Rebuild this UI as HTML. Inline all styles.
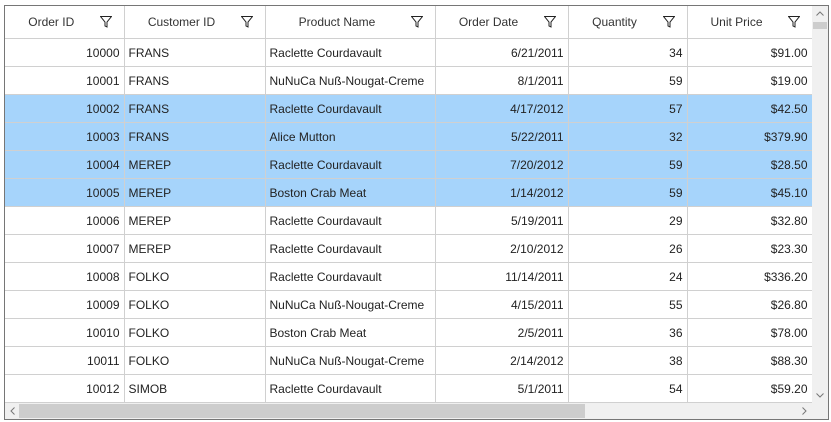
<!DOCTYPE html>
<html><head><style>
body{margin:0;width:831px;height:422px;background:#fff;font-family:"Liberation Sans",sans-serif;font-size:12px;position:relative;overflow:hidden}
.g{position:absolute;left:4px;top:5px;width:823px;height:413px;border:1px solid #767676;overflow:hidden}
table{border-collapse:collapse;table-layout:fixed;position:absolute;left:0;top:0}
td,th{border-right:1px solid #d0d0d0;border-bottom:1px solid #d0d0d0;padding:0 4px;white-space:nowrap;overflow:hidden}
th{height:32px;font-weight:normal;color:#333;position:relative;text-align:center;padding-right:30px}
th svg{position:absolute;right:12px;top:10px}
td{height:27px;color:#222}
.r{text-align:right}
tr.s td{background:#a6d4fb}
.vs{position:absolute;left:807px;top:0;width:16px;height:397px;background:#f0f0f0}
.hs{position:absolute;left:0;top:397px;width:807px;height:16px;background:#f0f0f0}
.corner{position:absolute;left:807px;top:397px;width:16px;height:16px;background:#f0f0f0}
</style></head><body>
<div class="g">
<table>
<colgroup><col style="width:119px"><col style="width:141px"><col style="width:170px"><col style="width:133px"><col style="width:119px"><col style="width:125px"></colgroup>
<tr><th>Order ID<svg width="12" height="12" viewBox="0 0 12 12"><path d="M0.5 0.5H11.5L7 6V11L5 10V6Z" fill="none" stroke="#222"/></svg></th><th>Customer ID<svg width="12" height="12" viewBox="0 0 12 12"><path d="M0.5 0.5H11.5L7 6V11L5 10V6Z" fill="none" stroke="#222"/></svg></th><th>Product Name<svg width="12" height="12" viewBox="0 0 12 12"><path d="M0.5 0.5H11.5L7 6V11L5 10V6Z" fill="none" stroke="#222"/></svg></th><th>Order Date<svg width="12" height="12" viewBox="0 0 12 12"><path d="M0.5 0.5H11.5L7 6V11L5 10V6Z" fill="none" stroke="#222"/></svg></th><th>Quantity<svg width="12" height="12" viewBox="0 0 12 12"><path d="M0.5 0.5H11.5L7 6V11L5 10V6Z" fill="none" stroke="#222"/></svg></th><th>Unit Price<svg width="12" height="12" viewBox="0 0 12 12"><path d="M0.5 0.5H11.5L7 6V11L5 10V6Z" fill="none" stroke="#222"/></svg></th></tr>
<tr><td class="r">10000</td><td>FRANS</td><td>Raclette Courdavault</td><td class="r">6/21/2011</td><td class="r">34</td><td class="r">$91.00</td></tr>
<tr><td class="r">10001</td><td>FRANS</td><td>NuNuCa Nuß-Nougat-Creme</td><td class="r">8/1/2011</td><td class="r">59</td><td class="r">$19.00</td></tr>
<tr class="s"><td class="r">10002</td><td>FRANS</td><td>Raclette Courdavault</td><td class="r">4/17/2012</td><td class="r">57</td><td class="r">$42.50</td></tr>
<tr class="s"><td class="r">10003</td><td>FRANS</td><td>Alice Mutton</td><td class="r">5/22/2011</td><td class="r">32</td><td class="r">$379.90</td></tr>
<tr class="s"><td class="r">10004</td><td>MEREP</td><td>Raclette Courdavault</td><td class="r">7/20/2012</td><td class="r">59</td><td class="r">$28.50</td></tr>
<tr class="s"><td class="r">10005</td><td>MEREP</td><td>Boston Crab Meat</td><td class="r">1/14/2012</td><td class="r">59</td><td class="r">$45.10</td></tr>
<tr><td class="r">10006</td><td>MEREP</td><td>Raclette Courdavault</td><td class="r">5/19/2011</td><td class="r">29</td><td class="r">$32.80</td></tr>
<tr><td class="r">10007</td><td>MEREP</td><td>Raclette Courdavault</td><td class="r">2/10/2012</td><td class="r">26</td><td class="r">$23.30</td></tr>
<tr><td class="r">10008</td><td>FOLKO</td><td>Raclette Courdavault</td><td class="r">11/14/2011</td><td class="r">24</td><td class="r">$336.20</td></tr>
<tr><td class="r">10009</td><td>FOLKO</td><td>NuNuCa Nuß-Nougat-Creme</td><td class="r">4/15/2011</td><td class="r">55</td><td class="r">$26.80</td></tr>
<tr><td class="r">10010</td><td>FOLKO</td><td>Boston Crab Meat</td><td class="r">2/5/2011</td><td class="r">36</td><td class="r">$78.00</td></tr>
<tr><td class="r">10011</td><td>FOLKO</td><td>NuNuCa Nuß-Nougat-Creme</td><td class="r">2/14/2012</td><td class="r">38</td><td class="r">$88.30</td></tr>
<tr><td class="r">10012</td><td>SIMOB</td><td>Raclette Courdavault</td><td class="r">5/1/2011</td><td class="r">54</td><td class="r">$59.20</td></tr>
<tr><td class="r">10013</td><td>SIMOB</td><td>Raclette Courdavault</td><td class="r">5/1/2011</td><td class="r">54</td><td class="r">$59.20</td></tr>
</table>
<div class="vs"><svg width="16" height="16" style="position:absolute;top:0"><path d="M4.5 9.5L8 6L11.5 9.5" fill="none" stroke="#777"/></svg><div style="position:absolute;left:1px;top:16px;width:14px;height:7px;background:#cdcdcd"></div><svg width="16" height="16" style="position:absolute;top:381px"><path d="M4.5 6.5L8 10L11.5 6.5" fill="none" stroke="#777"/></svg></div>
<div class="hs"><svg width="16" height="16" style="position:absolute;left:0"><path d="M9.5 4.5L6 8L9.5 11.5" fill="none" stroke="#777"/></svg><div style="position:absolute;left:14px;top:1px;width:566px;height:14px;background:#cdcdcd"></div><svg width="16" height="16" style="position:absolute;left:791px"><path d="M6.5 4.5L10 8L6.5 11.5" fill="none" stroke="#777"/></svg></div>
<div class="corner"></div>
</div>
</body></html>
